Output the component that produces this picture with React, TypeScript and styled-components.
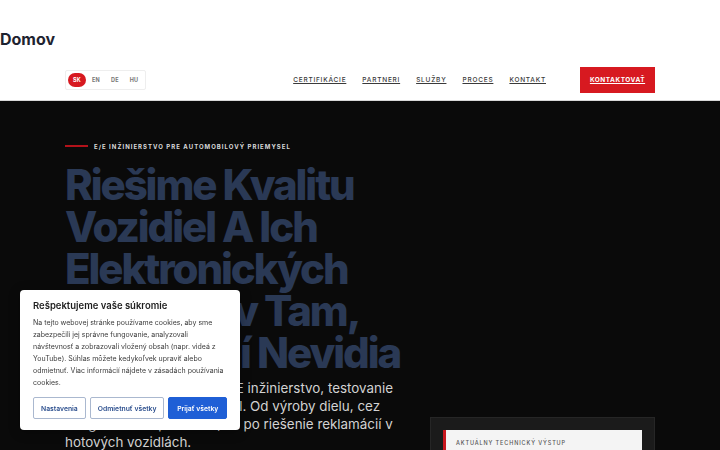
import React from 'react'
import styled, { createGlobalStyle } from 'styled-components'

const GlobalStyle = createGlobalStyle`
  html, body {
    margin: 0;
    padding: 0;
    background: #0a0a0a;
    font-family: Inter, 'Noto Sans', sans-serif;
    -webkit-font-smoothing: antialiased;
  }
`

const TopArea = styled.div`
  background: #fff;
`

const PageTitle = styled.h1`
  margin: 0;
  padding: 28px 0 10px;
  font-size: 16px;
  line-height: 22px;
  font-weight: 700;
  color: #1e2330;
`

const Header = styled.header`
  height: 40px;
  padding: 0 65px;
  display: flex;
  align-items: center;
  border-bottom: 1px solid #d8d8d8;
`

const LangSwitch = styled.div`
  display: flex;
  align-items: center;
  gap: 1px;
  padding: 2px 2px;
  border: 1px solid #eee;
  border-radius: 2px;
`

const Lang = styled.span<{ $active?: boolean }>`
  width: 18px;
  height: 14px;
  border-radius: 7px;
  display: flex;
  align-items: center;
  justify-content: center;
  font-size: 5.5px;
  font-weight: 700;
  letter-spacing: 0.05em;
  color: ${(p) => (p.$active ? '#fff' : '#777')};
  background: ${(p) => (p.$active ? '#d71920' : 'transparent')};
`

const Nav = styled.nav`
  margin-left: auto;
  display: flex;
  gap: 16px;
`

const NavLink = styled.a`
  font-size: 6.5px;
  font-weight: 500;
  letter-spacing: 0.12em;
  color: #3a3a3a;
  text-decoration: underline;
  text-underline-offset: 1px;
`

const CtaButton = styled.a`
  margin-left: 34px;
  width: 75px;
  height: 26px;
  display: flex;
  align-items: center;
  justify-content: center;
  background: #d71920;
  color: #fff;
  font-size: 6.5px;
  font-weight: 700;
  letter-spacing: 0.08em;
  text-decoration: underline;
  text-underline-offset: 1px;
`

const Hero = styled.section`
  background: #0a0a0a;
  padding: 40px 65px 0;
  display: grid;
  grid-template-columns: 335px 225px;
  column-gap: 30px;
  height: 349px;
  box-sizing: border-box;
  overflow: hidden;
`

const Intro = styled.div`
  display: flex;
  flex-direction: column;
`

const Eyebrow = styled.div`
  display: flex;
  align-items: center;
  gap: 6px;
  height: 10px;
  font-size: 6px;
  font-weight: 700;
  letter-spacing: 0.17em;
  color: #d9d9d9;
  white-space: nowrap;

  &::before {
    content: '';
    width: 23px;
    height: 1.5px;
    background: #b3121a;
  }
`

const Heading = styled.h2`
  margin: 13px 0 0;
  font-size: 42px;
  line-height: 42px;
  font-weight: 800;
  letter-spacing: -0.05em;
  color: #2a3955;
  width: 370px;
`

const Lead = styled.p`
  margin: 5px 0 0;
  font-size: 13.4px;
  line-height: 18px;
  color: #d2d2d2;
  width: 336px;
`

const Aside = styled.div`
  padding-top: 276px;
`

const OutputFrame = styled.div`
  background: #1b1b1b;
  border: 1px solid #262626;
  padding: 12px 12px 0;
  height: 80px;
`

const OutputCard = styled.div`
  background: #f4f4f4;
  border-left: 3px solid #c8161e;
  padding: 10px 10px;
  height: 100%;
  font-size: 5.5px;
  font-weight: 500;
  letter-spacing: 0.16em;
  color: #555;
`

const Consent = styled.div`
  position: fixed;
  left: 20px;
  bottom: 20px;
  width: 220px;
  box-sizing: border-box;
  padding: 10px 13px 11px;
  background: #fff;
  border-radius: 4px;
  box-shadow: 0 2px 12px rgba(0, 0, 0, 0.3);
`

const ConsentTitle = styled.div`
  font-size: 9.5px;
  font-weight: 600;
  color: #1e1e1e;
  margin-bottom: 6px;
`

const ConsentText = styled.p`
  margin: 0;
  font-size: 7px;
  line-height: 12px;
  color: #3c3c3c;
`

const ConsentActions = styled.div`
  margin-top: 8px;
  display: flex;
  gap: 4px;
`

const ConsentButton = styled.button<{ $primary?: boolean }>`
  height: 22px;
  padding: 0 7px;
  font-family: inherit;
  font-size: 6.8px;
  font-weight: 600;
  white-space: nowrap;
  border-radius: 2px;
  border: 1.5px solid ${(p) => (p.$primary ? '#1f5fd6' : '#aab8cf')};
  background: ${(p) => (p.$primary ? '#1f5fd6' : '#fff')};
  color: ${(p) => (p.$primary ? '#fff' : '#2c4f8e')};
  flex: ${(p) => (p.$primary ? '1' : 'none')};
`

const navItems = ['CERTIFIKÁCIE', 'PARTNERI', 'SLUŽBY', 'PROCES', 'KONTAKT']

export default function App() {
  return (
    <>
      <GlobalStyle />
      <TopArea>
        <PageTitle>Domov</PageTitle>
        <Header>
          <LangSwitch>
            <Lang $active>SK</Lang>
            <Lang>EN</Lang>
            <Lang>DE</Lang>
            <Lang>HU</Lang>
          </LangSwitch>
          <Nav>
            {navItems.map((n) => (
              <NavLink key={n}>{n}</NavLink>
            ))}
          </Nav>
          <CtaButton>KONTAKTOVAŤ</CtaButton>
        </Header>
      </TopArea>
      <Hero>
        <Intro>
          <Eyebrow>E/E INŽINIERSTVO PRE AUTOMOBILOVÝ PRIEMYSEL</Eyebrow>
          <Heading>
            Riešime Kvalitu Vozidiel A Ich Elektronických Systémov Tam, Kde Druhí Nevidia
          </Heading>
          <Lead>
            Poskytujeme komplexné E/E inžinierstvo, testovanie a overovanie kvality vozidiel. Od výroby
            dielu, cez integráciu komponentov, až po riešenie reklamácií v hotových vozidlách.
          </Lead>
        </Intro>
        <Aside>
          <OutputFrame>
            <OutputCard>AKTUÁLNY TECHNICKÝ VÝSTUP</OutputCard>
          </OutputFrame>
        </Aside>
      </Hero>
      <Consent>
        <ConsentTitle>Rešpektujeme vaše súkromie</ConsentTitle>
        <ConsentText>
          Na tejto webovej stránke používame cookies, aby sme zabezpečili jej správne fungovanie,
          analyzovali návštevnosť a zobrazovali vložený obsah (napr. videá z YouTube). Súhlas môžete
          kedykoľvek upraviť alebo odmietnuť. Viac informácií nájdete v zásadách používania cookies.
        </ConsentText>
        <ConsentActions>
          <ConsentButton>Nastavenia</ConsentButton>
          <ConsentButton>Odmietnuť všetky</ConsentButton>
          <ConsentButton $primary>Prijať všetky</ConsentButton>
        </ConsentActions>
      </Consent>
    </>
  )
}
